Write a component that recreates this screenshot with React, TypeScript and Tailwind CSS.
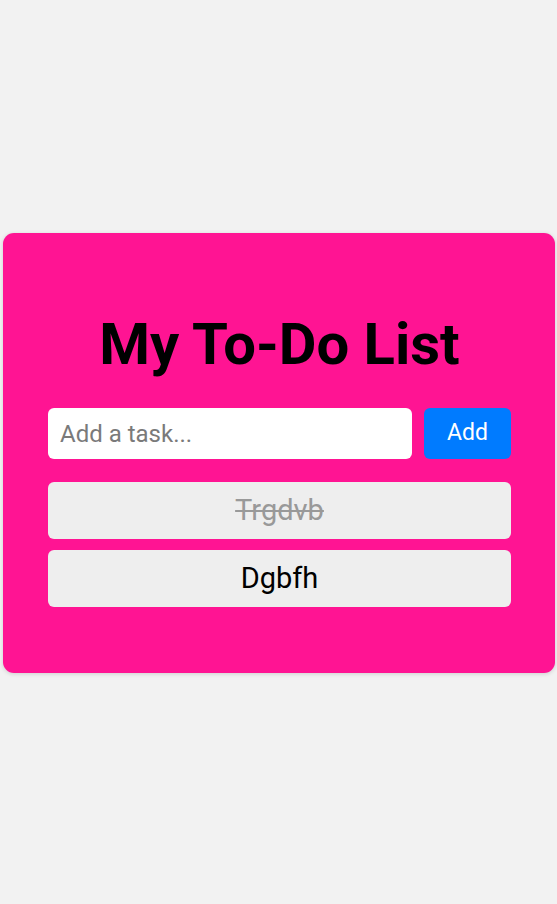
import { useState } from "react";

type Task = { id: number; text: string; done: boolean };

export default function App() {
  const [tasks, setTasks] = useState<Task[]>([
    { id: 1, text: "Trgdvb", done: true },
    { id: 2, text: "Dgbfh", done: false },
  ]);
  const [value, setValue] = useState("");

  const addTask = () => {
    if (!value.trim()) return;
    setTasks([...tasks, { id: Date.now(), text: value.trim(), done: false }]);
    setValue("");
  };

  return (
    <div className="min-h-screen bg-[#f2f2f2] pt-[233px] font-['Roboto',sans-serif]">
      <div className="ml-[3px] w-[552px] h-[440px] bg-[#ff1493] rounded-[11px] shadow-[0_1px_4px_rgba(0,0,0,0.15)] pl-[45px] pr-[44px] pt-[76px]">
        <h1 className="text-center text-[58px] leading-[70px] font-bold text-black">My To-Do List</h1>

        <div className="flex gap-[12px] mt-[29px]">
          <input
            value={value}
            onChange={(e) => setValue(e.target.value)}
            placeholder="Add a task..."
            className="flex-1 min-w-0 h-[51px] bg-white rounded-[6px] px-[12px] text-[24px] text-black placeholder:text-[#7a7a7a] outline-none"
          />
          <button
            onClick={addTask}
            className="w-[87px] h-[51px] bg-[#007bff] rounded-[6px] text-white text-[23px]"
          >
            Add
          </button>
        </div>

        <ul className="mt-[23px] flex flex-col gap-[11px]">
          {tasks.map((t) => (
            <li
              key={t.id}
              onClick={() => setTasks(tasks.map((x) => (x.id === t.id ? { ...x, done: !x.done } : x)))}
              className={`h-[57px] bg-[#eeeeee] rounded-[6px] flex items-center justify-center text-[29px] cursor-pointer ${
                t.done ? "line-through text-[#999999]" : "text-black"
              }`}
            >
              {t.text}
            </li>
          ))}
        </ul>
      </div>
    </div>
  );
}
